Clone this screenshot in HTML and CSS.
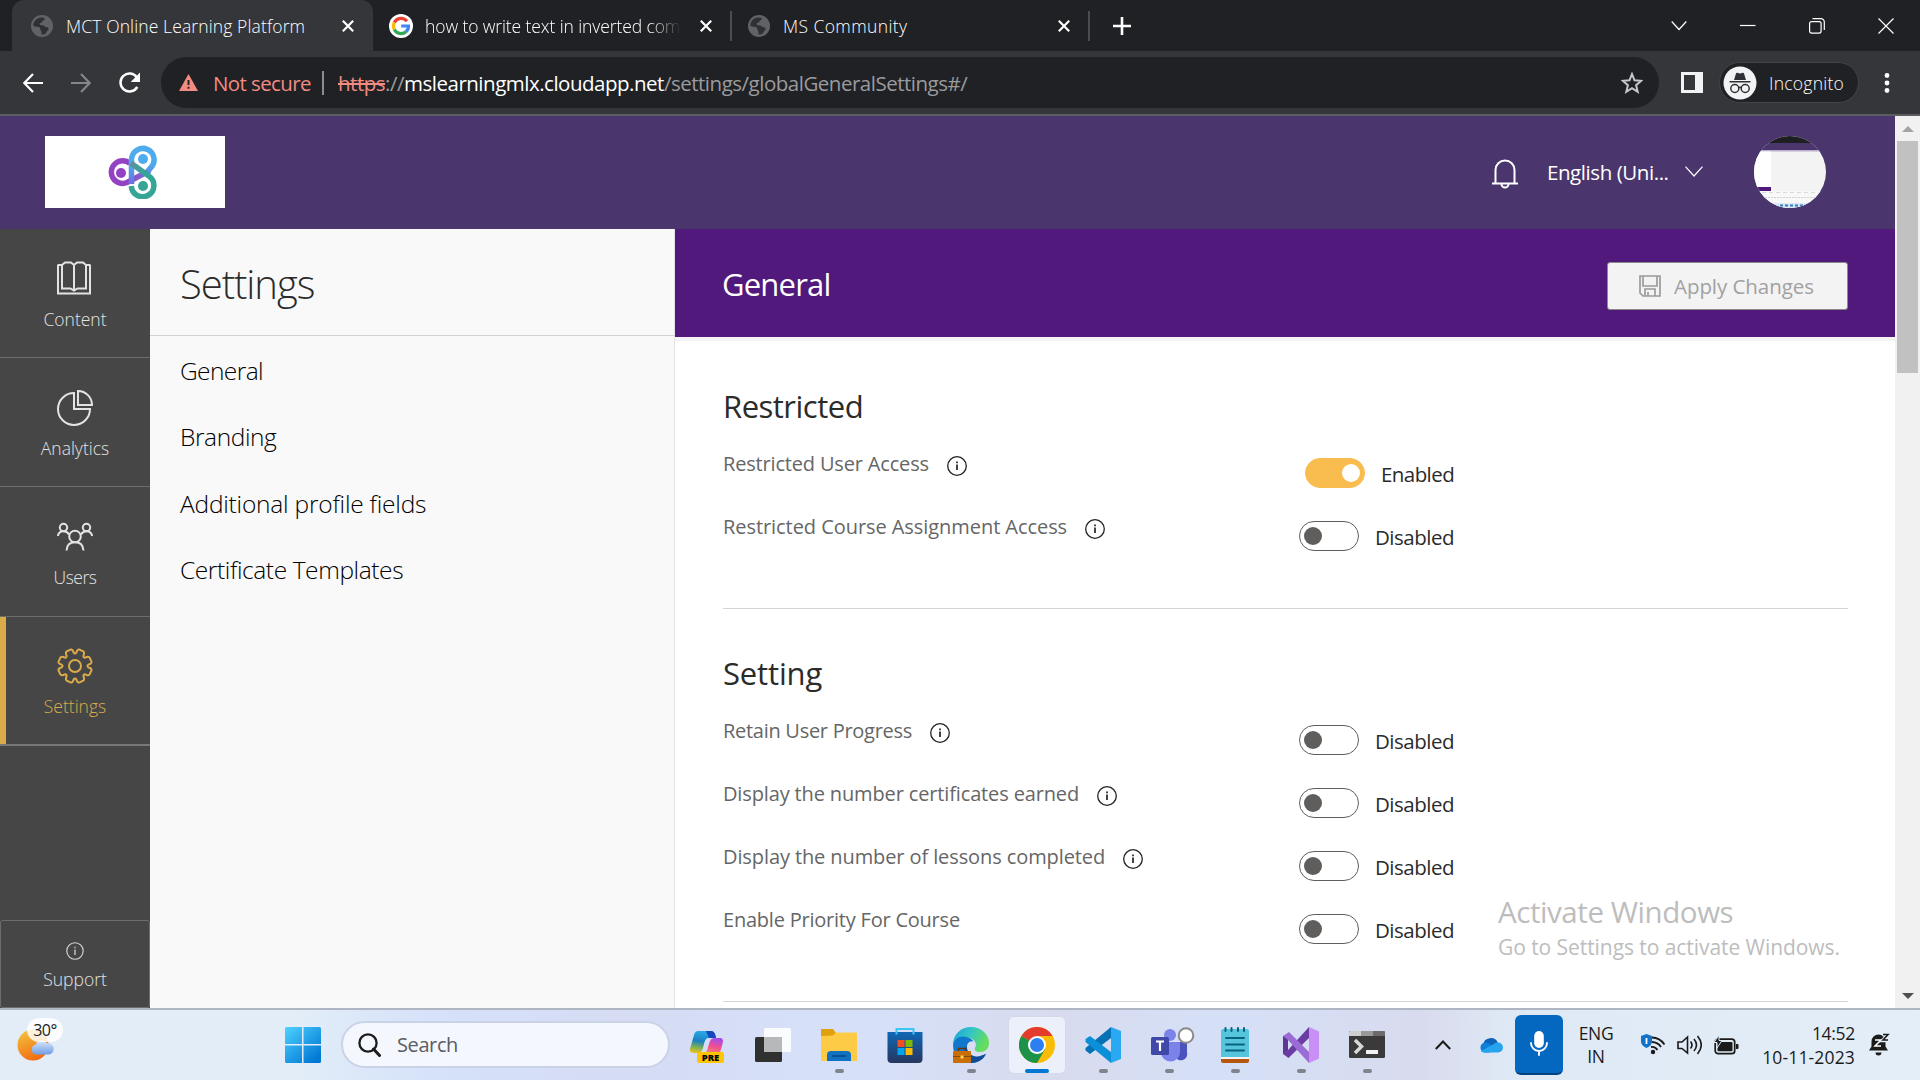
FILE: index.html
```html
<!DOCTYPE html>
<html lang="en">
<head>
<meta charset="utf-8">
<title>MCT Online Learning Platform</title>
<link rel="stylesheet" href="styles.css">
</head>
<body>
<svg class="defs" width="0" height="0">
  <defs>
    <symbol id="globe" viewBox="0 0 22 22"><circle cx="11" cy="11" r="11" fill="#5f6368"/><path d="M10 2.500c-4.500.5-8 4-7.600 8.500 2.600.8 5 .6 6.200 1.600 1.200.9.200 2.400 1.400 3.400.8.800.5 2 .4 3.400 1.600.3 3-.2 4.600-1-.1-1.900 1.800-2.300 2.600-3.900.4-1.200-.9-2.600-2.800-2.600-1.400-.1-1.600-1.600-3-1.600-1.700 0-2.900 0-3.100-1.400-.1-1.500 2.500-.9 2.700-2.400.1-1.500 2.100-1.100 2.600-2.500.1-.8-.9-1.500-4-1.500z" fill="#2f3034"/></symbol>
    <symbol id="cross" viewBox="0 0 12 12"><path d="M.8.8l10.400 10.400M11.200.8L.8 11.200" stroke="#fff" stroke-width="2.200" fill="none"/></symbol>
    <symbol id="info" viewBox="0 0 20 20"><circle cx="10" cy="10" r="9.300" fill="none" stroke="#222" stroke-width="1.300"/><path d="M10 8.500v5.500M10 5.500v1.800" stroke="#222" stroke-width="1.700"/></symbol>
  </defs>
</svg>

<div class="tabstrip">
  <div class="tab tab-active">
    <svg class="favicon" width="22" height="22"><use href="#globe"/></svg>
    <span class="tab-title t1">MCT Online Learning Platform</span>
    <svg class="tab-close" width="12" height="12"><use href="#cross"/></svg>
  </div>
  <div class="tab tab-second">
    <svg class="favicon" width="24" height="24" viewBox="0 0 24 24"><circle cx="12" cy="12" r="12" fill="#fff"/><g fill="none" stroke-width="3.200"><path d="M18 7.300A7.600 7.600 0 0 0 5.300 8.500" stroke="#ea4335"/><path d="M5.300 8.500a7.600 7.600 0 0 0 0 7" stroke="#fbbc05"/><path d="M5.300 15.500a7.600 7.600 0 0 0 11.700 2.200" stroke="#34a853"/><path d="M17 17.700c1.800-1.500 2.600-3.500 2.500-5.700H12.200" stroke="#4285f4"/></g></svg>
    <span class="tab-title t2">how to write text in inverted com</span>
    <svg class="tab-close" width="12" height="12"><use href="#cross"/></svg>
  </div>
  <div class="tab tab-third">
    <svg class="favicon" width="22" height="22"><use href="#globe"/></svg>
    <span class="tab-title t3">MS Community</span>
    <svg class="tab-close" width="12" height="12"><use href="#cross"/></svg>
  </div>
  <svg class="new-tab" width="18" height="18" viewBox="0 0 18 18"><path d="M9 0v18M0 9h18" stroke="#fff" stroke-width="2.600"/></svg>
  <div class="window-controls">
    <svg width="16" height="16" viewBox="0 0 16 16"><path d="M.7 3.500L8 11.500l7.300-8"/></svg>
    <svg width="16" height="16" viewBox="0 0 16 16"><path d="M0 7.500h15.500"/></svg>
    <svg width="16" height="16" viewBox="0 0 16 16"><rect x=".6" y="3.600" width="11.500" height="11.500" rx="2"/><path d="M3.500.7h8.500a3.300 3.300 0 0 1 3.300 3.300v8"/></svg>
    <svg width="16" height="16" viewBox="0 0 16 16"><path d="M.5.5l15 15M15.500.5l-15 15"/></svg>
  </div>
</div>

<div class="toolbar">
  <svg class="nav-back" width="20" height="20" viewBox="0 0 20 20"><path d="M20 10H1.500M10 1L1.300 10l8.700 9" fill="none" stroke="#fff" stroke-width="2.200"/></svg>
  <svg class="nav-forward" width="20" height="20" viewBox="0 0 20 20"><path d="M0 10h18.500M10 1l8.700 9-8.700 9" fill="none" stroke="#85868a" stroke-width="2.200"/></svg>
  <svg class="nav-reload" width="22" height="22" viewBox="0 0 22 22"><path d="M18.300 15A9 9 0 1 1 18 5.500" fill="none" stroke="#fff" stroke-width="2.500"/><path d="M21 .5V10h-9.300z" fill="#fff"/></svg>
  <div class="omnibox">
    <svg width="19" height="17" viewBox="0 0 19 17"><path d="M9.500 0L19 17H0z" fill="#f28b82"/><path d="M9.500 6v5M9.500 12.700v2" stroke="#202124" stroke-width="1.900"/></svg>
    <span class="not-secure">Not secure</span>
    <span class="omni-sep"></span>
    <span class="url"><span class="url-scheme">https</span>://<span class="url-host">mslearningmlx.cloudapp.net</span>/settings/globalGeneralSettings#/</span>
    <svg class="star" width="22" height="22" viewBox="0 0 22 22"><path d="M11 2l2.500 6.300 6.700.5-5.100 4.400 1.600 6.600L11 16.200l-5.700 3.600 1.600-6.600L1.800 8.800l6.700-.5z" fill="none" stroke="#c6c7c9" stroke-width="2"/></svg>
  </div>
  <svg class="side-panel" width="22" height="21" viewBox="0 0 22 21"><path d="M0 0h22v21H0zM3 3v15h11V3z" fill="#f1f3f4" fill-rule="evenodd"/></svg>
  <div class="incognito">
    <svg width="34" height="34" viewBox="0 0 34 34"><circle cx="17" cy="17" r="16.500" fill="#f1f3f4"/><path d="M11 14l2-6.500c.4-.9 1.100-.8 2-.5 1.300.5 2.700.5 4 0 .9-.3 1.600-.4 2 .5l2 6.500zM6.500 15h21v1.500h-21z" fill="#303136"/><g fill="none" stroke="#303136" stroke-width="1.500"><circle cx="11.800" cy="22.500" r="4"/><circle cx="22.200" cy="22.500" r="4"/><path d="M15.500 21.700q1.500-.9 3 0"/></g></svg>
    <span class="incognito-text">Incognito</span>
  </div>
  <svg class="menu-dots" width="6" height="20" viewBox="0 0 6 20"><g fill="#fff"><circle cx="3" cy="2.500" r="2.400"/><circle cx="3" cy="10" r="2.400"/><circle cx="3" cy="17.500" r="2.400"/></g></svg>
</div>

<div class="viewport">
  <div class="page">
    <header class="app-header">
      <div class="logo">
        <svg width="50" height="54" viewBox="0 0 50 54"><defs><linearGradient id="la" x1="0" y1="0" x2="1" y2="0"><stop offset=".5" stop-color="#9442c4"/><stop offset="1" stop-color="#6f7fe0"/></linearGradient><linearGradient id="lb" x1="0" y1="0" x2="0" y2="1"><stop offset=".45" stop-color="#4dabee"/><stop offset="1" stop-color="#6a6fdc"/></linearGradient><linearGradient id="lc" x1="0" y1="0" x2="1" y2="1"><stop offset="0" stop-color="#5f8fa0"/><stop offset=".4" stop-color="#35a696"/></linearGradient></defs><g fill="none" stroke-width="5.500"><path d="M22 18.500A11.300 11.300 0 1 0 19 37.500L42 25.500" stroke="url(#la)"/><path d="M23.500 39V14a11.300 11.300 0 1 1 19 9L40 26" stroke="url(#lb)"/><path d="M22.800 18l18 13a11.300 11.300 0 1 1-17.500 10" stroke="url(#lc)"/></g><circle cx="13" cy="28" r="5" fill="#9442c4"/><circle cx="35" cy="14" r="5" fill="#4dabee"/><circle cx="35" cy="41" r="5" fill="#35a696"/></svg>
      </div>
      <svg class="bell" width="26" height="31" viewBox="0 0 26 31"><g fill="none" stroke="#fff" stroke-width="2"><path d="M3.500 25V12a9.500 9.500 0 0 1 19 0v13M0 25.500h26M9.500 26a3.500 3.500 0 0 0 7 0"/></g></svg>
      <span class="language">English (Uni...</span>
      <svg class="lang-chevron" width="18" height="11" viewBox="0 0 18 11"><path d="M.5.7L9 10 17.500.7" fill="none" stroke="#fff" stroke-width="1.200"/></svg>
      <svg class="avatar" width="72" height="72" viewBox="0 0 72 72"><defs><clipPath id="av"><circle cx="36" cy="36" r="36"/></clipPath></defs><g clip-path="url(#av)"><path d="M0 0h72v72H0z" fill="#f3f3f4"/><path d="M0 0h72v7H0z" fill="#1d1f22"/><path d="M0 7h72v7H0z" fill="#4a366c"/><path d="M0 14h72v1.500H0z" fill="#b9aecb"/><path d="M0 15.500h17V51H0z" fill="#fff"/><path d="M0 51h17v4H0z" fill="#51197b"/><path d="M0 55h72v17H0z" fill="#f7f8f7"/><path d="M8 56.500h58" stroke="#d8dadc" stroke-dasharray="4 3"/><path d="M8 61.500h58" stroke="#d0d3d2" stroke-dasharray="2 1"/><path d="M0 67h72v5H0z" fill="#dbe7f5"/><path d="M26 69.500h24" stroke="#2b7fc4" stroke-width="2" stroke-dasharray="3 2"/></g></svg>
    </header>
    <div class="columns">
      <nav class="rail">
        <a class="rail-item"><svg width="36" height="36" viewBox="0 0 36 36"><path d="M1 3.500v29h32v-29M5 4v23.500h8.500l3.500 2 3.500-2H29V4M17 4v25M5 4l3-2.500h6L17 4l3-2.500h6L29 4M1 4h4M29 4h4" fill="none" stroke="#e3e3e3" stroke-width="2"/></svg><span>Content</span></a>
        <a class="rail-item"><svg width="36" height="36" viewBox="0 0 36 36"><path d="M17 3A16 16 0 1 0 33 19H17zM21 1v14h14A14 14 0 0 0 21 1z" fill="none" stroke="#e3e3e3" stroke-width="2"/></svg><span>Analytics</span></a>
        <a class="rail-item"><svg width="36" height="36" viewBox="0 0 36 36"><g fill="none" stroke="#e3e3e3" stroke-width="2"><circle cx="18" cy="17.500" r="5.800"/><circle cx="6.500" cy="8.500" r="3.700"/><circle cx="29.500" cy="8.500" r="3.700"/><path d="M.8 17c.6-3 2.700-4.700 5.700-4.700s4.300 1 5.500 3.200M35.200 17c-.6-3-2.700-4.700-5.700-4.700s-4.300 1-5.500 3.200M9.500 31.500c.3-5 3.300-8.200 8.500-8.200s8.200 3.200 8.500 8.200"/></g></svg><span class="users">Users</span></a>
        <a class="rail-item rail-active"><svg width="36" height="36" viewBox="0 0 36 36"><g fill="none" stroke="#dcab49" stroke-width="2"><circle cx="18" cy="18" r="6"/><path d="M12 2.300q2.800-2 4 .7l.7 1.700q1.300 1.700 2.600 0L20 3q1.200-2.700 4-.7l1 .5q2.800.7 1.900 3.600l-.5 1.400q-.2 2.100 1.800 1.800l1.500-.6q2.900-.8 3.500 1.900l.5 1.100q2 2.800-.7 4l-1.700.7q-1.700 1.300 0 2.600l1.700.7q2.700 1.200.7 4l-.5 1.100q-.6 2.700-3.500 1.900l-1.500-.6q-2-.3-1.800 1.800l.5 1.400q.9 2.900-1.900 3.600l-1 .5q-2.800 2-4-.7l-.7-1.700q-1.300-1.700-2.600 0L16 33q-1.200 2.700-4 .7l-1-.5q-2.800-.7-1.900-3.600l.5-1.400q.2-2.100-1.800-1.800l-1.500.6q-2.900.8-3.500-1.900L2.300 24q-2-2.800.7-4l1.700-.7q1.700-1.300 0-2.600L3 16q-2.700-1.200-.7-4l.5-1.100q.6-2.700 3.500-1.900l1.500.6q2 .3 1.800-1.800l-.5-1.400Q8.200 3.500 11 2.800z" stroke-linejoin="round"/></g></svg><span>Settings</span></a>
        <a class="support"><svg width="18" height="18" viewBox="0 0 18 18"><circle cx="9" cy="9" r="8.200" fill="none" stroke="#ddd" stroke-width="1.100"/><path d="M9 7.500v5.500M9 4.800v1.500" stroke="#ddd" stroke-width="1.200"/></svg><span>Support</span></a>
      </nav>
      <aside class="settings-panel">
        <h1 class="panel-title">Settings</h1>
        <ul class="panel-list">
          <li class="l1">General</li>
          <li class="l2">Branding</li>
          <li class="l3">Additional profile fields</li>
          <li class="l4">Certificate Templates</li>
        </ul>
      </aside>
      <main class="main">
        <div class="main-head">
          <h2 class="main-title">General</h2>
          <button class="apply"><svg width="22" height="22" viewBox="0 0 22 22"><path d="M1 1h20v20H4l-3-3zM4 1.500V11h14V1.500M6 21v-7h10v7M9 21v-4" fill="none" stroke="#9b9b9b" stroke-width="1.700"/></svg><span class="apply-text">Apply Changes</span></button>
        </div>
        <section class="group group-restricted">
          <h3>Restricted</h3>
          <div class="row"><span class="label b1">Restricted User Access</span><svg class="info" width="20" height="20"><use href="#info"/></svg><span class="toggle on"></span><span class="state enabled">Enabled</span></div>
          <div class="row"><span class="label b2">Restricted Course Assignment Access</span><svg class="info" width="20" height="20"><use href="#info"/></svg><span class="toggle"></span><span class="state">Disabled</span></div>
        </section>
        <section class="group group-setting">
          <h3>Setting</h3>
          <div class="row"><span class="label b3">Retain User Progress</span><svg class="info" width="20" height="20"><use href="#info"/></svg><span class="toggle"></span><span class="state">Disabled</span></div>
          <div class="row"><span class="label b4">Display the number certificates earned</span><svg class="info" width="20" height="20"><use href="#info"/></svg><span class="toggle"></span><span class="state">Disabled</span></div>
          <div class="row"><span class="label b5">Display the number of lessons completed</span><svg class="info" width="20" height="20"><use href="#info"/></svg><span class="toggle"></span><span class="state">Disabled</span></div>
          <div class="row"><span class="label b6">Enable Priority For Course</span><span class="toggle"></span><span class="state">Disabled</span></div>
        </section>
      </main>
    </div>
  </div>
  <div class="scrollbar">
    <svg width="12" height="6" viewBox="0 0 12 6"><path d="M0 6l6-6 6 6z" fill="#a3a3a3"/></svg>
    <div class="thumb"></div>
    <svg class="down" width="12" height="6" viewBox="0 0 12 6"><path d="M0 0l6 6 6-6z" fill="#505050"/></svg>
  </div>
  <div class="watermark"><div class="w1">Activate Windows</div><div class="w2">Go to Settings to activate Windows.</div></div>
</div>

<footer class="taskbar">
  <div class="weather">
    <svg width="48" height="54" viewBox="0 0 48 54"><defs><linearGradient id="sun" x1=".2" y1="0" x2=".6" y2="1"><stop offset="0" stop-color="#f3c33f"/><stop offset="1" stop-color="#f26a10"/></linearGradient><linearGradient id="cld" x1="0" y1="0" x2="0" y2="1"><stop offset="0" stop-color="#dbe8fb"/><stop offset="1" stop-color="#6f9de6"/></linearGradient></defs><circle cx="16" cy="27" r="15.500" fill="url(#sun)"/><path d="M19 36.500a5 5 0 0 1-.5-9.800 6.500 6.500 0 0 1 11.500-1.500 5.700 5.700 0 0 1 2 11.300z" fill="url(#cld)"/></svg>
    <span class="temp">30°</span>
  </div>
  <svg class="start" width="36" height="36" viewBox="0 0 36 36"><defs><linearGradient id="win" gradientUnits="userSpaceOnUse" x1="0" y1="0" x2="30" y2="34"><stop offset="0" stop-color="#4fd2ff"/><stop offset="1" stop-color="#0078d4"/></linearGradient></defs><path d="M1.500 0H17v17H0V1.500A1.500 1.500 0 0 1 1.500 0zM18.500 0h16A1.500 1.500 0 0 1 36 1.500V17H18.500zM0 18.500h17V36H1.500A1.500 1.500 0 0 1 0 34.500zM18.500 18.500H36v16a1.500 1.500 0 0 1-1.500 1.500h-16z" fill="url(#win)"/></svg>
  <div class="search">
    <svg width="23" height="24" viewBox="0 0 23 24"><circle cx="10" cy="10" r="8.600" fill="none" stroke="#1b1b1b" stroke-width="2.300"/><path d="M15.500 16l6 6.500" stroke="#1b1b1b" stroke-width="3" stroke-linecap="round"/></svg>
    <span class="search-text">Search</span>
  </div>
  <div class="apps">
    <div class="app"><svg width="36" height="36" viewBox="0 0 36 36"><defs><linearGradient id="cp1" x1=".4" y1="0" x2=".2" y2="1"><stop offset="0" stop-color="#28a9e6"/><stop offset=".45" stop-color="#1b80c4"/><stop offset=".75" stop-color="#7fb350"/><stop offset="1" stop-color="#f1c21f"/></linearGradient><linearGradient id="cp2" x1=".6" y1="0" x2=".3" y2="1"><stop offset="0" stop-color="#a64be8"/><stop offset=".5" stop-color="#f0508f"/><stop offset="1" stop-color="#fb8d6a"/></linearGradient></defs><path d="M9 4h13c3 0 4 2 5 7h-7c-3 0-4 2-5 6l-1 4c-1 3-2 5-5 5H4c-3 0-3.500-3-2.500-6L5 8c.8-2.500 2-4 4-4z" fill="url(#cp1)"/><path d="M17 4h5c3 0 4 2 5 7h-7z" fill="#1746bd"/><path d="M26 11h5c3 0 3.500 2.500 2.500 6l-2 7c-.5 2-2 3-4 3H13c4 0 5-3 6-7l2-6c1-2 2-3 5-3z" fill="url(#cp2)"/><rect x="8" y="25" width="27" height="11" rx="2.500" fill="#ffc400"/><text x="21.500" y="34" class="pre" text-anchor="middle">PRE</text></svg></div>
    <div class="app"><svg width="36" height="36" viewBox="0 0 36 36"><rect x="0" y="10" width="27" height="25" rx="1.500" fill="#303030"/><rect x="9" y="1" width="27" height="24" rx="1.500" fill="#fff" fill-opacity=".88"/><path d="M9 10h18v15H9z" fill="#b6b8ba"/></svg></div>
    <div class="app running"><svg width="36" height="36" viewBox="0 0 36 36"><path d="M0 2h12l3 4-3 5H0z" fill="#e0a10c"/><path d="M0 9l12-.5L15 5.500h20a1 1 0 0 1 1 1V34H0z" fill="#fdcb46"/><path d="M6 34v-6a4 4 0 0 1 4-4h16a4 4 0 0 1 4 4v6z" fill="#1172c2"/><path d="M11 29h14" stroke="#0c4f93" stroke-width="2"/></svg></div>
    <div class="app"><svg width="36" height="36" viewBox="0 0 36 36"><defs><linearGradient id="st" x1="0" y1="0" x2="0" y2="1"><stop offset="0" stop-color="#0f68b5"/><stop offset="1" stop-color="#26365f"/></linearGradient></defs><path d="M.5 5h35v27a4 4 0 0 1-4 4h-27a4 4 0 0 1-4-4z" fill="url(#st)"/><path d="M9.500 7.500V2h17v5.500" fill="none" stroke="#3ec6f3" stroke-width="2"/><path d="M10.500 13h7v7h-7z" fill="#f25022"/><path d="M18.500 13h7v7h-7z" fill="#7fba00"/><path d="M10.500 21h7v7h-7z" fill="#00a4ef"/><path d="M18.500 21h7v7h-7z" fill="#ffb900"/></svg></div>
    <div class="app running"><svg width="36" height="36" viewBox="0 0 36 36"><defs><linearGradient id="ed" x1="0" y1="0" x2="1" y2=".4"><stop offset="0" stop-color="#1c9fe0"/><stop offset=".5" stop-color="#34c6c5"/><stop offset="1" stop-color="#66dd5c"/></linearGradient></defs><path d="M0 18C0 7 8 0 18 0s18 7 18 16c0 6-4 9-9 9-4 0-6-2-5-4 2-3 1-8-5-10S2 11 0 18z" fill="url(#ed)"/><path d="M0 18c1-7 8-10 14-8 3 .8 5 2.300 6.500 4.500-4-1-7 2-6.500 6.500.6 5 6 9.500 12 8.500l7-2.500c-3 6-9 9-15 9C8 36 0 29 0 18z" fill="#1177cd"/><path d="M14 19c-1 7 4 11.500 12 10.500l7-2.500c-3 6-9 9-15 9-6-2-8-12-4-17z" fill="#124c94"/><rect y="24" width="18" height="12" rx="1" fill="#c96f08"/><path d="M0 29.500h18" stroke="#8c4903"/><path d="M5.500 24v-2.500h7V24" stroke="#663104" stroke-width="1.500" fill="none"/><path d="M7.500 28.500h3v3h-3z" fill="#ffd75b"/></svg></div>
    <div class="app current"><svg width="36" height="36" viewBox="0 0 36 36"><circle cx="18" cy="18" r="18" fill="#fbbc05"/><path d="M18 18L2.400 9A18 18 0 0 1 33.600 9z" fill="#e33b2e"/><path d="M18 18L2.400 9A18 18 0 0 0 18 36l8-13.500z" fill="#1e9248"/><path d="M18 9h15.600L26 22.500z" fill="#fbbc05"/><circle cx="18" cy="18" r="9" fill="#fff"/><circle cx="18" cy="18" r="7" fill="#2d7ef0"/></svg></div>
    <div class="app running"><svg width="36" height="36" viewBox="0 0 36 36"><path d="M26 0l10 4v28l-10 4z" fill="#29a9f2"/><path d="M26 0v11L5 27l-4.500-3.500V21z" fill="#0671b5"/><path d="M26 36V25L5 9 .5 12v3z" fill="#0b8fd8"/></svg></div>
    <div class="app running"><svg class="teams" width="44" height="38" viewBox="0 0 44 38"><circle cx="19" cy="9" r="6" fill="#7b83eb"/><path d="M24 16h12v10a6 6 0 0 1-12 4z" fill="#4b53bc"/><path d="M10 16h19v10a9.500 9.500 0 0 1-19 0z" fill="#7b83eb"/><rect y="11" width="18" height="18" rx="1.500" fill="#4048a8"/><path d="M5 15.500h8M9 15.500V25" stroke="#fff" stroke-width="2.200"/><circle cx="35" cy="9.500" r="7.300" fill="#fff" stroke="#8a8a8a" stroke-width="2"/></svg></div>
    <div class="app running"><svg width="36" height="36" viewBox="0 0 36 36"><path d="M4 31h28v3a2 2 0 0 1-2 2H6a2 2 0 0 1-2-2z" fill="#b5570f"/><path d="M4 29h28v3H4z" fill="#f4f4f4"/><path d="M4 4a2 2 0 0 1 2-2h24a2 2 0 0 1 2 2v26H4z" fill="#56c4dd"/><path d="M9 11h18M9 17.500h18M9 23.500h18M8.500 1v3M14.500 1v3M21 1v3M27 1v3" stroke="#07627e" stroke-width="2" stroke-linecap="round"/></svg></div>
    <div class="app running"><svg width="36" height="36" viewBox="0 0 36 36"><path d="M26 0v11L5.500 31 0 27V9l5 4v10z" fill="#6a3da3"/><path d="M0 9l6-4 20 20v11L5 13v10L0 27z" fill="#9b6bd6"/><path d="M0 9l5 4v10l-5 4z" fill="#5f3694"/><path d="M26 0l10 4.500v27L26 36z" fill="#c98ff5"/></svg></div>
    <div class="app running"><svg width="36" height="36" viewBox="0 0 36 36"><rect y="4" width="36" height="27" rx="1.500" fill="#3a3a3a"/><path d="M0 9V5.500A1.500 1.500 0 0 1 1.500 4H12v5z" fill="#cfcfcf"/><path d="M12 4h12v5H12z" fill="#999"/><path d="M24 4h10.500A1.500 1.500 0 0 1 36 5.500V9H24z" fill="#6b6b6b"/><path d="M6 13l6.500 6.500L6 26" fill="none" stroke="#d8d8d8" stroke-width="3.500"/><rect x="17" y="23" width="12" height="4" rx=".5" fill="#f2f2f2"/></svg></div>
  </div>
  <svg class="tray-chevron" width="16" height="10" viewBox="0 0 16 10"><path d="M.8 9L8 1.500 15.200 9" fill="none" stroke="#1b1b1b" stroke-width="2"/></svg>
  <svg class="onedrive" width="24" height="16" viewBox="0 0 24 16"><path d="M4 8a7.800 7.800 0 0 1 15-2L12 11z" fill="#0f63b8"/><path d="M5.500 15.500A5 5 0 0 1 4.500 6c3-1 5 0 8 2l-2 7.500z" fill="#0f7fd8"/><path d="M19 5.500a5 5 0 0 1 0 10H5.500c-1.500 0-2.500-.5-3.500-1.500L14 7.500c2-1.500 3-2 5-2z" fill="#26a4ee"/></svg>
  <div class="mic"><svg width="18" height="25" viewBox="0 0 18 25"><rect x="4.200" y="0" width="9.600" height="17" rx="4.800" fill="#fff"/><path d="M1 12a8 8 0 0 0 16 0M9 20v4" fill="none" stroke="#fff" stroke-width="1.900" stroke-linecap="round"/></svg></div>
  <div class="ime"><span>ENG</span><span>IN</span></div>
  <div class="tray">
    <svg width="24" height="22" viewBox="0 0 24 22"><g fill="none" stroke="#1b1b1b" stroke-width="1.800"><path d="M11 3.500a16 16 0 0 1 12.500 7M11 8a11 11 0 0 1 9 5M10 13a6.500 6.500 0 0 1 6.500 3"/></g><circle cx="12" cy="18" r="2.200" fill="#1b1b1b"/><path d="M5.500 0L11 2v5.500c0 3-2 5-5.500 6.500C2 12.500 0 10.500 0 7.500V2z" fill="#1272c8"/><path d="M5.500 4v6" stroke="#fff" stroke-width="1.800"/></svg>
    <svg width="25" height="20" viewBox="0 0 25 20"><path d="M1 7v6.500h4l5.500 4.500V2L5 7zM13.500 6.500q3 3.500 0 7M17 4q5 6 0 12M20.500 1q7.500 9 0 18" fill="none" stroke="#1b1b1b" stroke-width="1.600"/></svg>
    <svg width="25" height="20" viewBox="0 0 25 20"><rect x="1.200" y="4.200" width="19.500" height="14.500" rx="3" fill="none" stroke="#1b1b1b" stroke-width="1.700"/><rect x="3.500" y="7" width="15" height="9.300" rx="1" fill="#1b1b1b"/><path d="M22 9h1.500a1 1 0 0 1 1 1v3a1 1 0 0 1-1 1H22z" fill="#1b1b1b"/><path d="M5 0L0 7.500h3V13l5-7.500H5z" fill="#1b1b1b" stroke="#e3eef8" stroke-width="1"/></svg>
  </div>
  <div class="clock"><span class="time">14:52</span><span class="date">10-11-2023</span></div>
  <svg class="dnd" width="21" height="23" viewBox="0 0 21 23"><path d="M0 17.500l2.500-4V8.500a7 7 0 0 1 14 0v5l2.500 4zM6.500 19.500h6a3 3 0 0 1-6 0z" fill="#1b1b1b"/><path d="M6 7h6l-6 6h6" fill="none" stroke="#fff" stroke-width="1.500"/><path d="M13.500 1.500h6l-6 6h6" fill="none" stroke="#e3eef8" stroke-width="3.500"/><path d="M14 1.500h5l-5 5.500h5" fill="none" stroke="#1b1b1b" stroke-width="1.600"/></svg>
</footer>
</body>
</html>
```
FILE: styles.css
```css
* { box-sizing: border-box; }
body { margin: 0; width: 1920px; height: 1080px; overflow: hidden; display: flex; flex-direction: column; font-family: "Open Sans", "Noto Sans", sans-serif; background: #fff; }
svg { flex: none; display: block; }
.defs { position: absolute; }
h1, h2, h3, ul { margin: 0; padding: 0; font-weight: 400; list-style: none; }
span { white-space: nowrap; }

.tabstrip { height: 51px; flex: none; background: #202124; display: flex; align-items: center; padding-left: 12px; }
.tab { display: flex; align-items: center; height: 51px; color: #fff; font-size: 17.5px; font-weight: 300; }
.tab-active { width: 361px; background: #35363a; border-radius: 12px 12px 0 0; padding-left: 19px; }
.tab-active .tab-title { margin-left: 13px; width: 261px; letter-spacing: .12px; }
.tab-active .tab-close { margin-left: 15px; }
.tab-second { width: 357px; padding-left: 16px; }
.tab-second .tab-title { margin-left: 12px; width: 264px; letter-spacing: -.1px; mask-image: linear-gradient(90deg, #000 85%, transparent 97%); }
.tab-second .tab-close { margin-left: 11px; }
.tab-third { width: 360px; height: 30px; padding-left: 16px; border-left: 2px solid #4a4c50; border-right: 2px solid #4a4c50; }
.tab-third .tab-title { margin-left: 13px; width: 262px; letter-spacing: .4px; }
.tab-third .tab-close { margin-left: 13px; }
.new-tab { margin-left: 23px; }
.window-controls { margin-left: auto; margin-right: 26px; display: flex; gap: 53px; height: 43px; align-items: center; }
.window-controls path, .window-controls rect { fill: none; stroke: #fff; stroke-width: 1.2; }

.toolbar { height: 65px; flex: none; background: #35363a; border-bottom: 2px solid #5c5d60; display: flex; align-items: center; padding-left: 23px; }
.nav-forward { margin-left: 28px; }
.nav-reload { margin-left: 28px; }
.omnibox { margin-left: 20px; width: 1498px; height: 51px; border-radius: 26px; background: #202124; display: flex; align-items: center; padding: 0 16px 0 18px; font-size: 20.5px; }
.not-secure { color: #f28b82; margin-left: 15px; width: 98px; letter-spacing: -.6px; }
.omni-sep { width: 2px; height: 24px; background: #8b8c8f; margin: 0 14px 0 11px; }
.url { color: #9a9b9e; letter-spacing: -.49px; }
.url-scheme { color: #f28b82; text-decoration: line-through; }
.url-host { color: #fff; }
.star { margin-left: auto; }
.side-panel { margin-left: 22px; }
.incognito { margin-left: 16px; width: 140px; height: 41px; border-radius: 21px; border: 1px solid #434448; background: #202124; display: flex; align-items: center; padding-left: 3px; color: #fff; font-size: 17.5px; font-weight: 300; }
.incognito-text { margin-left: 12px; letter-spacing: .25px; }
.menu-dots { margin-left: 25px; }

.viewport { height: 892px; flex: none; display: flex; position: relative; }
.page { width: 1895px; display: flex; flex-direction: column; }
.app-header { height: 113px; flex: none; background: #4a366c; display: flex; align-items: center; padding: 0 0 2px 45px; }
.logo { width: 180px; height: 72px; background: #fff; display: flex; align-items: center; padding-left: 63px; }
.bell { margin: 3px 0 0 1267px; }
.language { margin-left: 29px; width: 122px; color: #fff; font-size: 20.5px; letter-spacing: -.43px; }
.lang-chevron { margin-left: 16px; }
.avatar { margin-left: 51px; }

.columns { flex: 1; min-height: 0; display: flex; }
.rail { width: 150px; background: #464646; color: #e3e3e3; font-size: 17.5px; font-weight: 300; display: flex; flex-direction: column; }
.rail-item { height: 129.2px; flex: none; border-bottom: 1px solid #6d6d6d; display: flex; flex-direction: column; align-items: center; padding-top: 31.5px; gap: 9px; line-height: 26px; }
.users { letter-spacing: -.5px; }
.rail-active { color: #dcab49; border-bottom-width: 2px; border-bottom-color: #777; background: linear-gradient(90deg, #dcab49 6px, transparent 6px); }
.support { margin-top: auto; height: 88px; border: 1px solid #6d6d6d; border-radius: 3px; display: flex; flex-direction: column; align-items: center; padding-top: 21px; gap: 6px; line-height: 26px; }

.settings-panel { width: 525px; background: #f9f9f9; border-right: 1px solid #e3e3e3; }
.panel-title { height: 107px; border-bottom: 1px solid #d2d2d2; padding: 25px 0 0 30px; font-size: 40px; line-height: 60px; font-weight: 300; color: #2b2b2b; letter-spacing: -1.05px; }
.panel-list { padding: 6px 0 0 30px; font-size: 24.5px; font-weight: 300; color: #000; line-height: 58px; }
.panel-list li { height: 66.4px; }
.l1 { letter-spacing: -.6px; }
.l2 { letter-spacing: -.4px; }
.l3 { letter-spacing: -.21px; }
.l4 { letter-spacing: -.4px; }

.main { flex: 1; background: #fff; overflow: hidden; }
.main-head { height: 112px; background: #51197b; border-bottom: 4px solid #f4f3f5; padding: 0 47px; display: flex; align-items: center; justify-content: space-between; }
.main-title { color: #fff; font-size: 31px; line-height: 44px; letter-spacing: -.8px; padding-top: 2px; }
.apply { width: 241px; height: 48px; margin-top: 5px; background: #f3f3f3; border: 1px solid #8c8a88; border-radius: 3px; display: flex; align-items: center; padding: 0 0 0 31px; gap: 13px; font: 20.5px "Open Sans", sans-serif; color: #a1a1a1; }
.apply-text { letter-spacing: -.06px; }
.group { margin: 0 47px 0 48px; border-bottom: 1px solid #d4d4d4; color: #2b2b2b; }
.group-restricted { padding-top: 43px; height: 268px; }
.group-setting { padding-top: 42px; height: 393px; }
.group h3 { font-size: 31px; line-height: 44px; margin-bottom: 13px; letter-spacing: -.5px; }
.group-setting h3 { letter-spacing: -.15px; }
.row { height: 63px; width: 731px; display: flex; align-items: flex-start; line-height: 28px; font-size: 20.5px; }
.label { margin-top: 9px; color: #666; font-size: 20px; }
.b1 { letter-spacing: -.17px; }
.b2 { letter-spacing: -.06px; }
.b3 { letter-spacing: -.28px; }
.b4 { letter-spacing: -.14px; }
.b5 { letter-spacing: -.1px; }
.b6 { letter-spacing: -.22px; }
.info { margin: 15px 0 0 18px; }
.toggle { margin: 17px 16px 0 auto; width: 60px; height: 30px; border-radius: 15px; border: 1px solid #605e5c; padding: 5px 4px; display: flex; }
.toggle::before { content: ""; width: 18px; height: 18px; border-radius: 9px; background: #605e5c; }
.toggle.on { background: #f9bc4f; border-color: #f9bc4f; justify-content: flex-end; }
.toggle.on::before { background: #fff; }
.state { margin-top: 19px; width: 79px; letter-spacing: -.5px; }
.state.enabled { width: 73px; letter-spacing: -.57px; }

.scrollbar { width: 25px; background: #f1f1f1; display: flex; flex-direction: column; align-items: center; padding: 10px 0 9px; }
.thumb { width: 21px; height: 232px; margin-top: 9px; background: #c1c1c1; }
.scrollbar .down { margin-top: auto; }
.watermark { position: absolute; left: 1498px; top: 776px; color: #bdbdbd; }
.w1 { font-size: 29.5px; line-height: 40px; letter-spacing: -.43px; }
.w2 { font-size: 21px; line-height: 30px; letter-spacing: -.06px; }

.taskbar { height: 72px; flex: none; border-top: 2px solid #adb6c2; display: flex; align-items: center; padding: 0 0 1px 17px; color: #1b1b1b; background: linear-gradient(90deg, #e2edf7 0, #e2edf8 300px, #d5e2f9 430px, #d5dcf4 620px, #d6e1f9 850px, #d8dbee 1060px, #d5e0f7 1220px, #d8dbee 1420px, #dfe9f5 1510px, #e3eef8 1920px); }
.weather { width: 48px; height: 54px; position: relative; }
.temp { position: absolute; left: 10px; top: 0; width: 36px; height: 24px; border-radius: 12px; background: rgba(255, 255, 255, .82); font-size: 16px; line-height: 24px; text-align: center; letter-spacing: -.6px; }
.start { margin-left: 220px; }
.search { margin-left: 20px; width: 329px; height: 47px; border-radius: 24px; background: #f4f7fe; border: 2px solid #c9d2e6; display: flex; align-items: center; padding-left: 15px; font-size: 20px; color: #5a5c60; }
.search-text { margin-left: 16px; letter-spacing: -.4px; }
.apps { margin-left: 9px; display: flex; gap: 10px; }
.app { width: 56px; height: 56px; border-radius: 5px; display: flex; flex-direction: column; align-items: center; padding-top: 10px; }
.app::after { content: ""; width: 9px; height: 5px; border-radius: 3px; margin-top: 6px; }
.running::after { background: #80848c; }
.current { background: #ecf0fa; box-shadow: 0 0 1px 1px #d3d9e8; }
.current::after { background: #0078d4; width: 24px; }
.teams { margin: -1px -6px -1px 2px; }
.pre { font: 800 9.5px "Open Sans", sans-serif; }
.tray-chevron { margin-left: 40px; }
.onedrive { margin-left: 28px; }
.mic { margin-left: 12px; width: 48px; height: 60px; border-radius: 6px; background: #0467c0; border-bottom: 2px solid #04427f; display: flex; align-items: center; justify-content: center; }
.ime { margin-left: 16px; width: 34px; display: flex; flex-direction: column; align-items: center; font-size: 17.5px; line-height: 23px; letter-spacing: -.4px; }
.tray { margin-left: 28px; display: flex; gap: 12px; align-items: center; }
.clock { margin-left: auto; display: flex; flex-direction: column; align-items: flex-end; font-size: 17.5px; line-height: 24px; }
.time { letter-spacing: -.3px; }
.date { letter-spacing: .15px; }
.dnd { margin: 0 30px 0 14px; }
```
